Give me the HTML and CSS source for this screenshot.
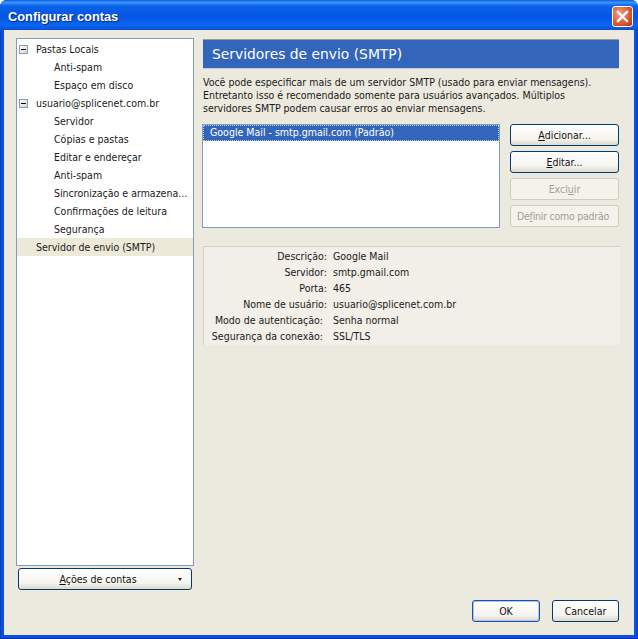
FILE: index.html
```html
<!DOCTYPE html>
<html lang="pt-BR">
<head>
<meta charset="utf-8">
<title>Configurar contas</title>
<link rel="stylesheet" href="styles.css">
</head>
<body>
<div class="window">
  <div class="titlebar">
    <span class="title">Configurar contas</span>
    <span class="close"><svg width="13" height="13" viewBox="0 0 13 13"><path d="M2 2 L11 11 M11 2 L2 11" stroke="#fff" stroke-width="2.4" stroke-linecap="square" fill="none"/></svg></span>
  </div>
  <div class="client">
    <div class="main">
      <div class="left">
        <ul class="tree">
          <li class="row top"><span class="twisty"></span>Pastas Locais</li>
          <li class="row sub">Anti-spam</li>
          <li class="row sub">Espaço em disco</li>
          <li class="row top"><span class="twisty"></span>usuario@splicenet.com.br</li>
          <li class="row sub">Servidor</li>
          <li class="row sub">Cópias e pastas</li>
          <li class="row sub">Editar e endereçar</li>
          <li class="row sub">Anti-spam</li>
          <li class="row sub">Sincronização e armazena...</li>
          <li class="row sub">Confirmações de leitura</li>
          <li class="row sub">Segurança</li>
          <li class="row top leaf selected">Servidor de envio (SMTP)</li>
        </ul>
        <button class="btn actions"><span><u>A</u>ções de contas</span><i class="arrow"></i></button>
      </div>
      <div class="right">
        <h1 class="heading">Servidores de envio (SMTP)</h1>
        <p class="desc">Você pode especificar mais de um servidor SMTP (usado para enviar mensagens). Entretanto isso é recomendado somente para usuários avançados. Múltiplos servidores SMTP podem causar erros ao enviar mensagens.</p>
        <div class="servers">
          <div class="listbox"><div class="item">Google Mail - smtp.gmail.com (Padrão)</div></div>
          <div class="side">
            <button class="btn"><u>A</u>dicionar...</button>
            <button class="btn"><u>E</u>ditar...</button>
            <button class="btn off">Excl<u>u</u>ir</button>
            <button class="btn off tight">De<u>f</u>inir como padrão</button>
          </div>
        </div>
        <dl class="info">
          <div class="irow"><dt>Descrição:</dt><dd>Google Mail</dd></div>
          <div class="irow"><dt>Servidor:</dt><dd>smtp.gmail.com</dd></div>
          <div class="irow"><dt>Porta:</dt><dd>465</dd></div>
          <div class="irow"><dt>Nome de usuário:</dt><dd>usuario@splicenet.com.br</dd></div>
          <div class="irow"><dt class="narrow">Modo de autenticação:</dt><dd>Senha normal</dd></div>
          <div class="irow"><dt class="narrow">Segurança da conexão:</dt><dd>SSL/TLS</dd></div>
        </dl>
      </div>
    </div>
    <div class="footer">
      <button class="btn ok">OK</button>
      <button class="btn cancel">Cancelar</button>
    </div>
  </div>
</div>
</body>
</html>
```
FILE: styles.css
```css
* { box-sizing: border-box; }
html, body { margin: 0; padding: 0; }
body { width: 638px; height: 639px; overflow: hidden; font-family: "DejaVu Sans Condensed", "DejaVu Sans", sans-serif; font-stretch: condensed; font-size: 10.5px; color: #1a1a1a; }
.window { width: 638px; height: 639px; display: flex; flex-direction: column; background: linear-gradient(90deg, #0a50e0 0, #0a50e0 100%); box-shadow: inset 0 -1px 0 #0a2fa8, inset 1px 0 0 #0a3cc0, inset -1px 0 0 #0a3cc0; border-radius: 7px 7px 0 0; }
.titlebar { height: 30px; flex: none; display: flex; align-items: center; justify-content: space-between; padding: 2px 5px 0 8px; background: linear-gradient(180deg, #0a5ae0 0%, #3d95ff 8%, #0a62e8 20%, #0555e4 55%, #0a66f0 85%, #0a50d0 100%); border-radius: 7px 7px 0 0; }
.title { color: #fff; font-family: "Liberation Sans", sans-serif; font-stretch: normal; font-weight: 700; font-size: 12.8px; margin-top: 1px; text-shadow: 1px 1px 1px #0a2a80; }
.close { width: 21px; height: 21px; margin-top: 1px; border: 1px solid #fff; border-radius: 3px; background: radial-gradient(circle at 35% 35%, #f0a080, #d8502a 65%, #b83010); display: flex; align-items: center; justify-content: center; }
.client { flex: 1; margin: 0 4px 4px 4px; background: #ece9df; display: flex; flex-direction: column; padding: 8px 15px 13px 12px; min-height: 0; }
.main { flex: 1; display: flex; gap: 9px; min-height: 0; }
.left { width: 178px; flex: none; display: flex; flex-direction: column; align-items: center; gap: 2px; }
.tree { list-style: none; margin: 0; padding: 1px 0 0; width: 178px; height: 528px; background: #fff; border: 1px solid #7f9db9; }
.row { height: 18px; line-height: 18px; display: flex; align-items: center; white-space: nowrap; }
.top { padding-left: 2px; }
.leaf { padding-left: 19px; }
.sub { padding-left: 37px; }
.selected { background: #ece9d8; }
.twisty { width: 9px; height: 9px; border: 1px solid #7f9db9; background: linear-gradient(135deg, #fff, #d8d4c8); margin-right: 8px; position: relative; flex: none; }
.twisty::after { content: ""; position: absolute; left: 1px; top: 3px; width: 5px; height: 1px; background: #000; }
.btn { font: inherit; color: #111; height: 22px; padding: 0; border: 1px solid #003c74; border-radius: 3px; background: linear-gradient(180deg, #fff 0%, #f5f4ee 70%, #dcd8cc 100%); display: flex; align-items: center; justify-content: center; white-space: nowrap; }
.actions { width: 174px; position: relative; flex: none; padding-right: 14px; }
.arrow { position: absolute; right: 9px; top: 9px; width: 0; height: 0; border-left: 2.5px solid transparent; border-right: 2.5px solid transparent; border-top: 3px solid #222; }
.right { flex: 1; min-width: 0; display: flex; flex-direction: column; padding-top: 1px; }
.heading { margin: 0; height: 30px; line-height: 29px; flex: none; padding-left: 9px; background: #3366bb; color: #fff; font-family: "DejaVu Sans", sans-serif; font-stretch: normal; font-size: 13.85px; font-weight: 400; border-top: 1px solid #a09a90; border-bottom: 1px solid #c4cbd8; }
.desc { margin: 7px 0 0; line-height: 13px; width: 410px; height: 39px; }
.servers { display: flex; gap: 10px; margin-top: 9px; margin-left: -1px; }
.listbox { width: 298px; height: 104px; background: #fff; border: 1px solid #7f9db9; }
.item { height: 16px; line-height: 15px; padding-left: 7px; background: #3366bb; color: #fff; outline: 1px dotted #bcd; outline-offset: -1px; }
.side { width: 109px; display: flex; flex-direction: column; gap: 5px; }
.off { color: #a3a091; border-color: #cfccc0; background: #f4f2ea; }
.tight { letter-spacing: -0.25px; padding-right: 3px; }
.info { margin: 18px -1px 0 0; padding: 1px 0 0; height: 99px; background: #f1efe7; border: 1px solid #d4d0c4; border-width: 1px 0 0 1px; }
.irow { display: flex; height: 16px; line-height: 16px; margin: 0; white-space: nowrap; }
.irow dt { width: 123px; text-align: right; flex: none; }
.irow dt.narrow { padding-right: 4px; }
.irow dd { margin: 0 0 0 6px; }
.footer { display: flex; justify-content: flex-end; gap: 12px; flex: none; padding-top: 10px; }
.ok { width: 68px; border-color: #2050a0; box-shadow: inset 0 0 0 1px #a8c8f0; }
.cancel { width: 67px; }
```
